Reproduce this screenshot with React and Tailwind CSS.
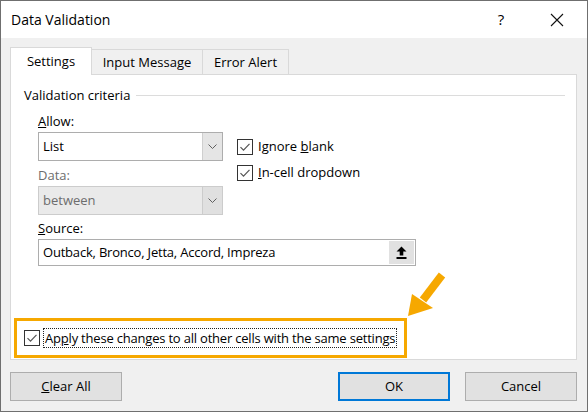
import React from "react";

// Excel-style "Data Validation" dialog, Settings tab

const font = "font-['Segoe_UI','Open_Sans',sans-serif]";

function Check() {
  return (
    <span className="w-[16px] h-[16px] border border-[#333333] bg-white flex items-center justify-center shrink-0">
      <svg width="12" height="10" viewBox="0 0 12 10">
        <path d="M1.5 5.2 L4.5 8.2 L10.5 1.8" fill="none" stroke="#555555" strokeWidth="1.2" />
      </svg>
    </span>
  );
}

function Chevron({ color = "#606060" }) {
  return (
    <svg width="9" height="5" viewBox="0 0 9 5">
      <path d="M0.5 0.5 L4.5 4.5 L8.5 0.5" fill="none" stroke={color} strokeWidth="1" />
    </svg>
  );
}

function Combo({ value, disabled }) {
  return (
    <div
      className={`w-[185px] h-[29px] flex border ${
        disabled ? "border-[#cccccc] bg-[#eaeaea] text-[#6d6d6d]" : "border-[#adadad] bg-white text-black"
      }`}
    >
      <div className="flex-1 flex items-center pl-[4px]">{value}</div>
      <div
        className={`w-[20px] flex items-center justify-center border-l ${
          disabled ? "border-[#cccccc] bg-[#e0e0e0]" : "border-[#cfcfcf] bg-[#e5e5e5]"
        }`}
      >
        <Chevron />
      </div>
    </div>
  );
}

function Btn({ children, primary }) {
  return (
    <button
      className={`w-[112px] h-[29px] bg-[#e1e1e1] text-black flex items-center justify-center ${
        primary ? "border-2 border-[#0078d7]" : "border border-[#adadad]"
      }`}
    >
      {children}
    </button>
  );
}

export default function App() {
  return (
    <div className={`relative w-[588px] h-[412px] border border-[#6f6f6f] bg-[#f0f0f0] flex flex-col text-[13px] leading-[19px] text-black ${font}`}>
      {/* Title bar */}
      <div className="h-[37px] bg-white flex items-center shrink-0">
        <span className="pl-[10px] text-[14px] flex-1">Data Validation</span>
        <span className="w-[20px] text-center text-[15px] mr-[39px]">?</span>
        <svg width="14" height="14" viewBox="0 0 14 14" className="mr-[23px]">
          <path d="M1 1 L13 13 M13 1 L1 13" stroke="#111111" strokeWidth="1.1" />
        </svg>
      </div>

      {/* Tabs */}
      <div className="flex items-end h-[36px] pl-[9px] shrink-0">
        <div className="relative z-10 w-[82px] h-[28px] -mb-px bg-white border border-b-0 border-[#d9d9d9] flex items-center justify-center">
          Settings
        </div>
        <div className="w-[111px] h-[25px] bg-[#f0f0f0] border-t border-r border-[#d9d9d9] flex items-center justify-center">
          Input Message
        </div>
        <div className="w-[86px] h-[25px] bg-[#f0f0f0] border-t border-r border-[#d9d9d9] flex items-center justify-center">
          Error Alert
        </div>
      </div>

      {/* Panel */}
      <div className="ml-[9px] w-[567px] h-[286px] bg-white border border-[#d9d9d9] flex flex-col shrink-0">
        <div className="flex items-center mt-[11px] pl-[13px] pr-[11px]">
          <span>Validation criteria</span>
          <div className="flex-1 h-px bg-[#dcdcdc] ml-[6px]" />
        </div>

        <div className="flex pl-[27px] mt-[7px]">
          <div className="flex flex-col">
            <span>
              <span className="underline">A</span>llow:
            </span>
            <div className="mt-[1px]">
              <Combo value="List" />
            </div>
            <span className="mt-[5px] text-[#6d6d6d]">Data:</span>
            <div className="mt-[1px]">
              <Combo value="between" disabled />
            </div>
            <span className="mt-[4px]">
              <span className="underline">S</span>ource:
            </span>
          </div>
          <div className="flex flex-col gap-[7px] ml-[14px] mt-[25px]">
            <div className="flex items-center gap-[5px]">
              <Check />
              <span>
                Ignore <span className="underline">b</span>lank
              </span>
            </div>
            <div className="flex items-center gap-[5px]">
              <Check />
              <span>
                <span className="underline">I</span>n-cell dropdown
              </span>
            </div>
          </div>
        </div>

        <div className="ml-[27px] mt-[1px] w-[378px] h-[27px] flex border border-[#adadad] bg-white">
          <div className="flex-1 flex items-center pl-[4px] tracking-[-0.2px]">Outback, Bronco, Jetta, Accord, Impreza</div>
          <div className="w-[25px] m-[1px] bg-[#e1e1e1] flex items-center justify-center">
            <svg width="11" height="13" viewBox="0 0 11 13">
              <path d="M5.5 0.5 L10.5 5.5 L7.3 5.5 L7.3 9.5 L3.7 9.5 L3.7 5.5 L0.5 5.5 Z" fill="#000000" />
              <rect x="0.5" y="11" width="10" height="2" fill="#000000" />
            </svg>
          </div>
        </div>

        <div className="flex-1" />

        {/* Apply-to-all row, framed */}
        <div className="ml-[3px] mb-[1px] w-[393px] h-[40px] border-[3px] border-[#f6a800] flex items-center pl-[7px]">
          <Check />
          <span className="ml-[3px] px-[1px] whitespace-nowrap tracking-[-0.2px] leading-[18px] border border-dotted border-[#222222]">
            Ap<span className="underline">p</span>ly these changes to all other cells with the same settings
          </span>
        </div>
      </div>

      {/* Buttons */}
      <div className="flex items-center mt-[12px] pl-[9px]">
        <Btn>
          <span>
            <span className="underline">C</span>lear All
          </span>
        </Btn>
        <div className="ml-[216px]">
          <Btn primary>OK</Btn>
        </div>
        <div className="ml-[15px]">
          <Btn>Cancel</Btn>
        </div>
      </div>

      {/* Annotation arrow */}
      <svg width="50" height="55" viewBox="0 0 50 55" className="absolute left-[399px] top-[264px]">
        <path d="M23 35 L42 10" stroke="#f6a800" strokeWidth="8" />
        <polygon points="8,51 12,29 33,43" fill="#f6a800" />
      </svg>
    </div>
  );
}
